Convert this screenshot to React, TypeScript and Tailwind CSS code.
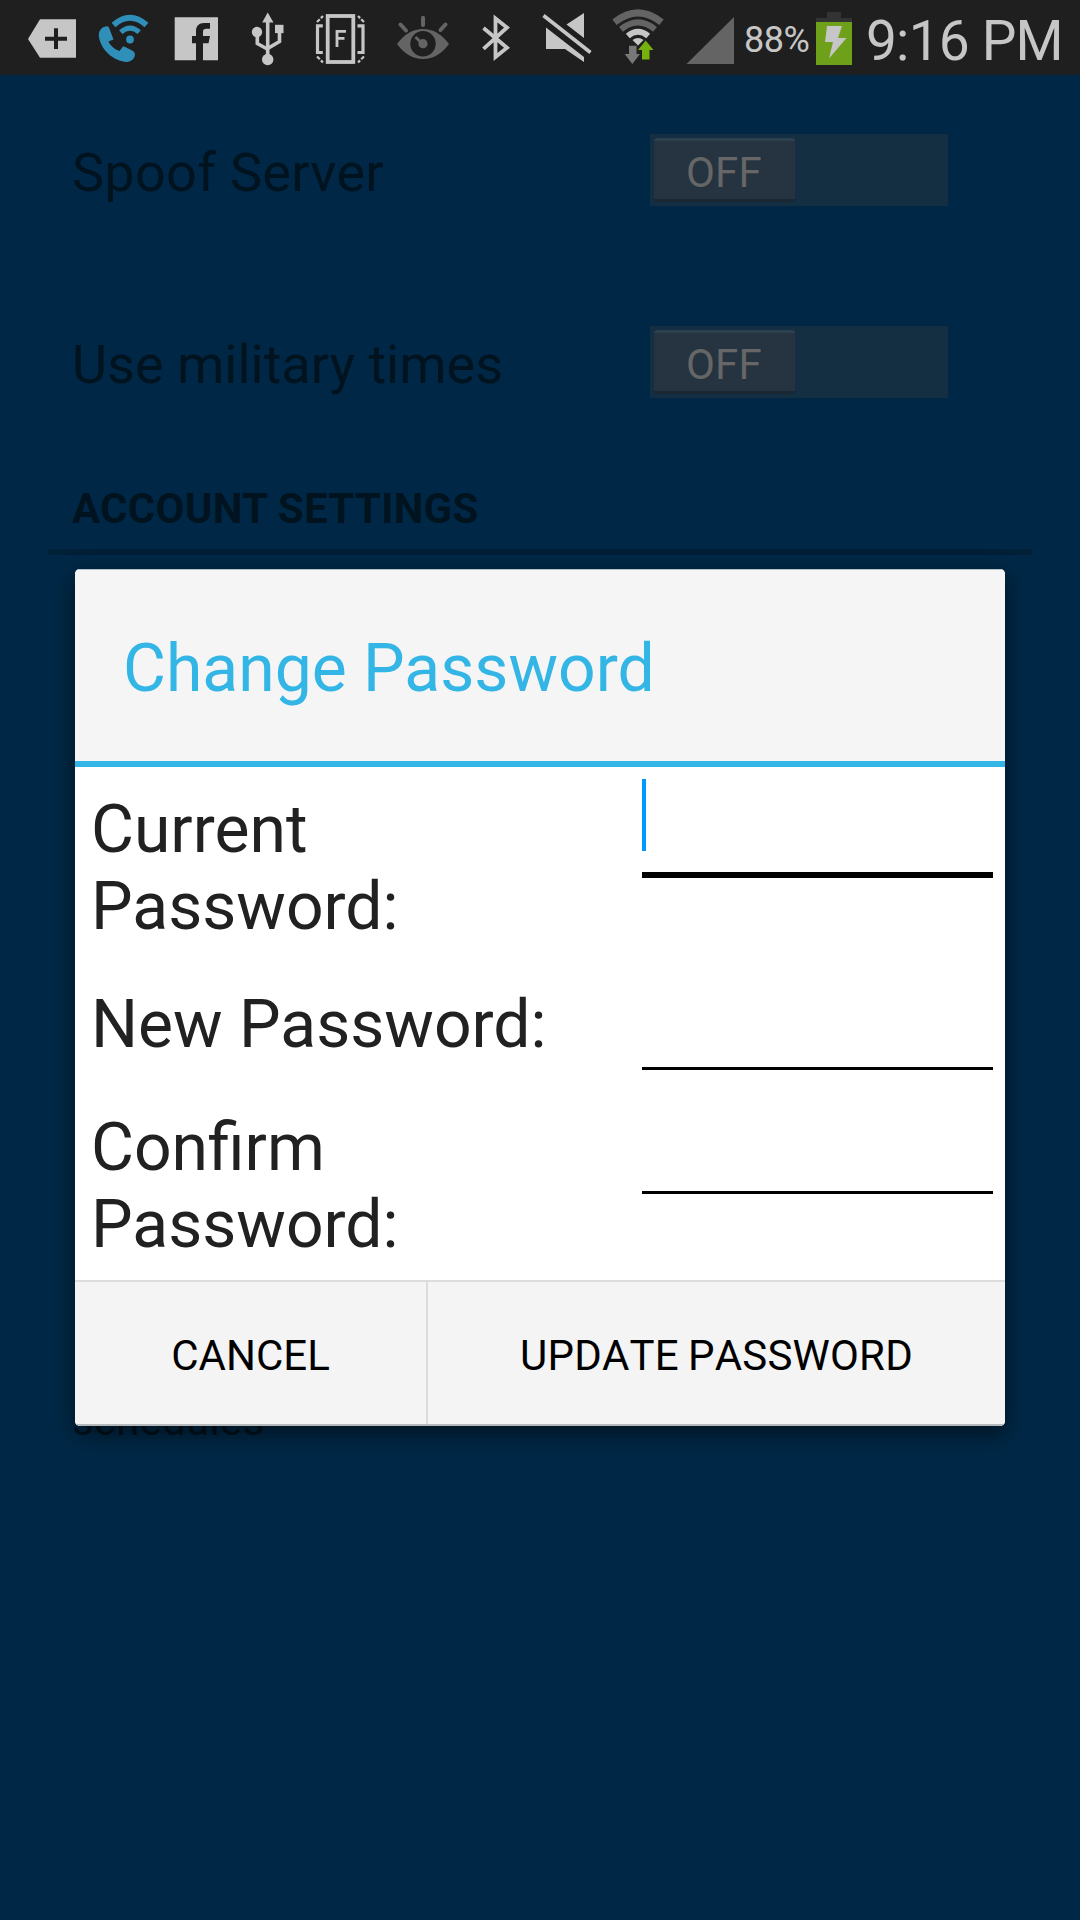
import React from "react";

function StatusIcon({ x, w, children }: { x: number; w: number; children: React.ReactNode }) {
  return (
    <svg width={w} height={75} viewBox={`${x} 0 ${w} 75`} className="block shrink-0" fill="#c6c6c6">
      {children}
    </svg>
  );
}

function StatusBar() {
  return (
    <div className="flex h-[75px] w-full shrink-0 bg-[#1f1f1f]">
      <StatusIcon x={0} w={88}>
        <path d="M28 39L40 19.2H76V57.8H40Z" />
        <path d="M45 36.700H54V28.300H58V36.700H67V40.700H58V49H54V40.700H45Z" fill="#1f1f1f" />
      </StatusIcon>
      <StatusIcon x={88} w={72}>
        <g fill="#2f8fb8">
          <path d="M106.500 26.200C101 27 98 31.500 99 37C101 50 113 60.500 126 62C131 62.300 135.500 58.500 134.800 53.500C134.500 51.500 132 50 123.200 46.300L119.500 51C115 49.500 110 45.500 108.500 41.500L113.500 39.500L109 27.500Q108 26 106.500 26.200Z" />
          <circle cx="130" cy="39.500" r="3.900" />
        </g>
        <path d="M120.800 32.200Q130 24.200 139.200 32.200" fill="none" stroke="#2f8fb8" strokeWidth="5" />
        <path d="M113.500 25Q130 10.500 146.500 25" fill="none" stroke="#2f8fb8" strokeWidth="5.800" />
      </StatusIcon>
      <StatusIcon x={160} w={80}>
        <path d="M174.700 17.200H218V60.300H203V43.300H208.500L210 36H203V32C203 29.500 204 28.800 206.500 28.800H210V23H204C199 23 196 26 196 31V36H192V43.300H196V60.300H174.700Z" />
      </StatusIcon>
      <StatusIcon x={240} w={60}>
        <path d="M267.700 12.500L273.500 22.500H262.200Z" />
        <rect x="275" y="24.800" width="8.500" height="8.300" />
        <circle cx="257" cy="32" r="5.200" />
        <circle cx="267.700" cy="59.500" r="5.700" />
        <path d="M267.700 20V56M257.300 34V43.500L267.700 49.300M279.500 31V41.500L267.700 48.500" fill="none" stroke="#c6c6c6" strokeWidth="3.600" />
      </StatusIcon>
      <StatusIcon x={300} w={80}>
        <g fill="none" stroke="#c6c6c6">
          <rect x="327.700" y="16" width="25.600" height="46" strokeWidth="3.800" />
          <path d="M322.800 25.800H317.500V52.500H322.800M357.500 25.800H363V52.500H357.500" strokeWidth="3.200" />
          <path d="M317 22L323 16M364 22L358 16M317 56.500L323 62.500M364 56.500L358 62.500" strokeWidth="2.200" strokeDasharray="4 1.500" />
          <path d="M337 47V31.300H346M337 38.300H344.500" strokeWidth="2.800" />
        </g>
      </StatusIcon>
      <StatusIcon x={380} w={85}>
        <path d="M397 44Q408 29 423 29T449 44Q438 59 423 59T397 44Z" fill="#646464" />
        <circle cx="423" cy="43.700" r="12.700" fill="#1f1f1f" />
        <circle cx="423" cy="43.700" r="4.600" fill="#646464" />
        <path d="M415.500 37L420 41.500" stroke="#646464" strokeWidth="3" />
        <path d="M423 17.800V25M400.500 24.500L406 30.500M445.500 24.500L440.500 30" stroke="#646464" strokeWidth="4" strokeLinecap="round" />
      </StatusIcon>
      <StatusIcon x={465} w={65}>
        <path d="M483.500 28L507 47.800L495.500 57V18.500L507 27.500L483.500 48.800" fill="none" stroke="#c6c6c6" strokeWidth="3.800" />
      </StatusIcon>
      <StatusIcon x={530} w={70}>
        <path d="M584 13V38L566.500 24.500ZM546 27.500L584 57V62L565 49H546Z" />
        <path d="M543.500 15.500L590.500 52.500" stroke="#c6c6c6" strokeWidth="3.600" />
      </StatusIcon>
      <StatusIcon x={600} w={75}>
        <g fill="none">
          <path d="M614.500 22.300Q638 3.500 661.500 22.300" stroke="#646464" strokeWidth="7" />
          <path d="M621 29.300Q638 15.500 655 29.300" stroke="#646464" strokeWidth="6" />
          <path d="M627.800 36Q638 27.500 648.200 36" stroke="#c6c6c6" strokeWidth="6" />
        </g>
        <path d="M632.500 40Q638 36 643.500 40L638 45.500Z" />
        <path d="M629 45.700H636.500V54H640L632.300 64L624.700 54H629Z" fill="#787878" />
        <path d="M642 59.500H649.500V50H653.500L645.700 40.500L638 50H642Z" fill="#76b00e" />
      </StatusIcon>
      <StatusIcon x={675} w={69}>
        <path d="M734 17V64H686.500Z" fill="#646464" />
      </StatusIcon>
      <div className="w-[72px] shrink-0 whitespace-nowrap pt-[20px] text-[36px] leading-[40px] tracking-[-0.5px] text-[#c6c6c6]">88%</div>
      <StatusIcon x={816} w={51}>
        <rect x="827" y="12" width="14" height="7" fill="#333" />
        <rect x="816" y="18" width="36" height="5" fill="#333" />
        <rect x="816" y="22" width="36" height="43" fill="#6fa019" />
        <path d="M827 26H842L838 38H846.500L829 58.500L833 42H825Z" />
      </StatusIcon>
      <div className="-ml-px whitespace-nowrap pt-[11px] text-[55px] leading-[61px] tracking-[-0.8px] text-[#c6c6c6]">9:16 PM</div>
    </div>
  );
}

function SettingRow({ label, className }: { label: string; className: string }) {
  return (
    <div className="flex h-[192px] items-center pl-[72px]">
      <div className={`w-[578px] pt-[6px] text-[54px] leading-[72px] text-[#00131f] ${className}`}>{label}</div>
      <div className="flex h-[72px] w-[298px] bg-[#142f42] pt-[4px] pl-[4px]">
        <div className="h-[64px] w-[141px] rounded-[3px] border-t-[3px] border-b-[3px] border-t-[#2b3f4c] border-b-[#182731] bg-[#253440] pr-px text-center text-[42px] leading-[63px] tracking-[0.3px] text-[#666]">
          OFF
        </div>
      </div>
    </div>
  );
}

function Field({ label, className, focused, line = "h-[84px]" }: { label: string; className: string; focused?: boolean; line?: string }) {
  return (
    <div className={`flex items-start justify-between pl-[16px] pr-[12px] ${className}`}>
      <div className="w-[470px] text-[66px] leading-[77px] text-[#212121]">{label}</div>
      {focused ? (
        <div className="-mt-[12px] h-[99px] w-[351px] border-b-[6px] border-black">
          <div className="h-[72px] w-[4px] bg-[#0099ff]" />
        </div>
      ) : (
        <div className={`w-[351px] border-b-[3px] border-black ${line}`} />
      )}
    </div>
  );
}

function Dialog() {
  return (
    <div className="absolute left-[75px] top-[569px] flex h-[857px] w-[930px] flex-col overflow-hidden rounded-[5px] bg-white">
      <div className="h-[192px] shrink-0 border-t border-[#b8c0c6] bg-[#f5f5f5] pl-[48px] pt-[60px] text-[66px] leading-[78px] text-[#33b5e5]">
        Change Password
      </div>
      <div className="h-[6px] shrink-0 bg-[#33b5e5]" />
      <div className="flex h-[513px] shrink-0 flex-col pt-[24px]">
        <Field label="Current Password:" className="h-[195px]" focused />
        <Field label="New Password:" className="h-[123px]" />
        <Field label="Confirm Password:" className="h-[154px]" line="h-[85px]" />
      </div>
      <div className="flex grow border-t-2 border-b-2 border-t-[#dcdcdc] border-b-[#b5b9bc] bg-[#f4f4f4] text-[42px] leading-[148px] text-black">
        <div className="h-[142px] w-[353px] border-r-2 border-[#dcdcdc] text-center">CANCEL</div>
        <div className="h-[142px] grow text-center tracking-[0.2px] [font-kerning:none] [word-spacing:-1.5px]">UPDATE PASSWORD</div>
      </div>
    </div>
  );
}

export default function App() {
  return (
    <div className="relative flex h-[1920px] w-[1080px] flex-col overflow-hidden bg-[#002846] font-['Roboto',sans-serif]">
      <StatusBar />
      <div className="-mt-px">
        <SettingRow label="Spoof Server" className="tracking-[0.3px]" />
        <SettingRow label="Use military times" className="tracking-normal" />
      </div>
      <div className="pl-[72px] pt-[24px] text-[42px] font-bold leading-[54px] tracking-[0.25px] text-[#00131f]">ACCOUNT SETTINGS</div>
      <div className="mx-[48px] mt-[13px] h-[6px] bg-[#002038]" />
      <div className="pl-[72px] pt-[839px] text-[42px] leading-[54px] tracking-[0.25px] text-[#00131f]">schedules</div>
      <div className="absolute left-[75px] top-[569px] h-[857px] w-[930px] rounded-[5px] shadow-[0_8px_22px_rgba(0,0,0,0.55)]" />
      <Dialog />
    </div>
  );
}
